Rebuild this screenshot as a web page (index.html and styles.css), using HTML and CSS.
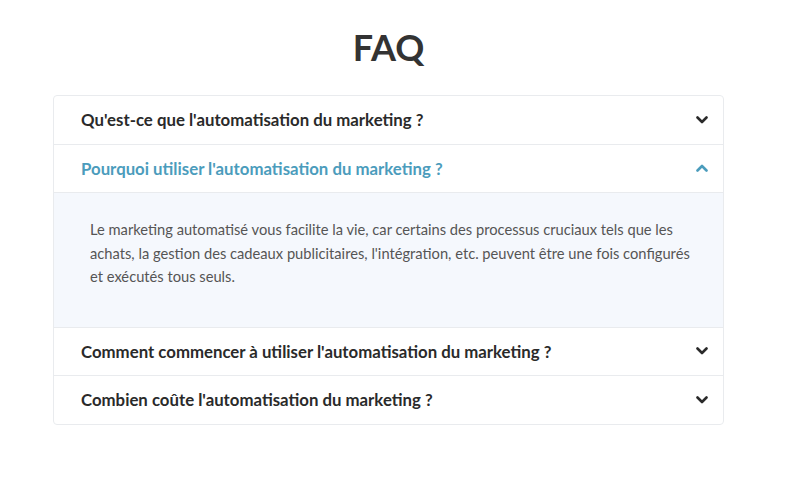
FILE: index.html
```html
<!DOCTYPE html>
<html lang="fr">
<head>
<meta charset="utf-8">
<title>FAQ</title>
<link rel="stylesheet" href="styles.css">
</head>
<body>
<main class="page">
  <h1 class="title">FAQ</h1>
  <div class="faq">
    <div class="item">
      <div class="question">
        <span>Qu'est-ce que l'automatisation du marketing ?</span>
        <svg class="chev" viewBox="0 0 12 8" width="12" height="8"><path d="M1.5 1.5 L6 6 L10.5 1.5" fill="none" stroke="currentColor" stroke-width="2.6" stroke-linecap="round" stroke-linejoin="round"/></svg>
      </div>
    </div>
    <div class="item open">
      <div class="question">
        <span>Pourquoi utiliser l'automatisation du marketing ?</span>
        <svg class="chev" viewBox="0 0 12 8" width="12" height="8"><path d="M1.5 6.5 L6 2 L10.5 6.5" fill="none" stroke="currentColor" stroke-width="2.6" stroke-linecap="round" stroke-linejoin="round"/></svg>
      </div>
      <div class="answer">
        <p>Le marketing automatisé vous facilite la vie, car certains des processus cruciaux tels que les achats, la gestion des cadeaux publicitaires, l'intégration, etc. peuvent être une fois configurés et exécutés tous seuls.</p>
      </div>
    </div>
    <div class="item">
      <div class="question">
        <span>Comment commencer à utiliser l'automatisation du marketing ?</span>
        <svg class="chev" viewBox="0 0 12 8" width="12" height="8"><path d="M1.5 1.5 L6 6 L10.5 1.5" fill="none" stroke="currentColor" stroke-width="2.6" stroke-linecap="round" stroke-linejoin="round"/></svg>
      </div>
    </div>
    <div class="item">
      <div class="question">
        <span>Combien coûte l'automatisation du marketing ?</span>
        <svg class="chev" viewBox="0 0 12 8" width="12" height="8"><path d="M1.5 1.5 L6 6 L10.5 1.5" fill="none" stroke="currentColor" stroke-width="2.6" stroke-linecap="round" stroke-linejoin="round"/></svg>
      </div>
    </div>
  </div>
</main>
</body>
</html>
```

FILE: styles.css
```css
* { box-sizing: border-box; }
body {
  margin: 0;
  background: #ffffff;
  font-family: "Lato", "Open Sans", sans-serif;
  color: #2b2b2b;
}
.page {
  padding: 24px 86px 0 53px;
}
.title {
  margin: 0 0 25px;
  text-align: center;
  font-size: 36px;
  line-height: 46px;
  font-weight: 700;
  color: #333333;
}
.faq {
  width: 671px;
  border: 1px solid #e9ebee;
  border-radius: 4px;
  overflow: hidden;
}
.item + .item {
  border-top: 1px solid #e9ebee;
}
.question {
  height: 47.5px;
  display: flex;
  align-items: center;
  justify-content: space-between;
  padding: 0 15px 0 27px;
  font-size: 16.8px;
  font-weight: 700;
  color: #2a2a2a;
}
.chev { color: #2a2a2a; flex: none; }
.open .question { color: #4b9cbc; }
.open .chev { color: #4b9cbc; }
.answer {
  border-top: 1px solid #e9ebee;
  background: #f5f8fd;
  padding: 25px 20px 38px 36px;
}
.answer p {
  margin: 0;
  font-size: 14.7px;
  line-height: 23.5px;
  color: #555555;
}
```
